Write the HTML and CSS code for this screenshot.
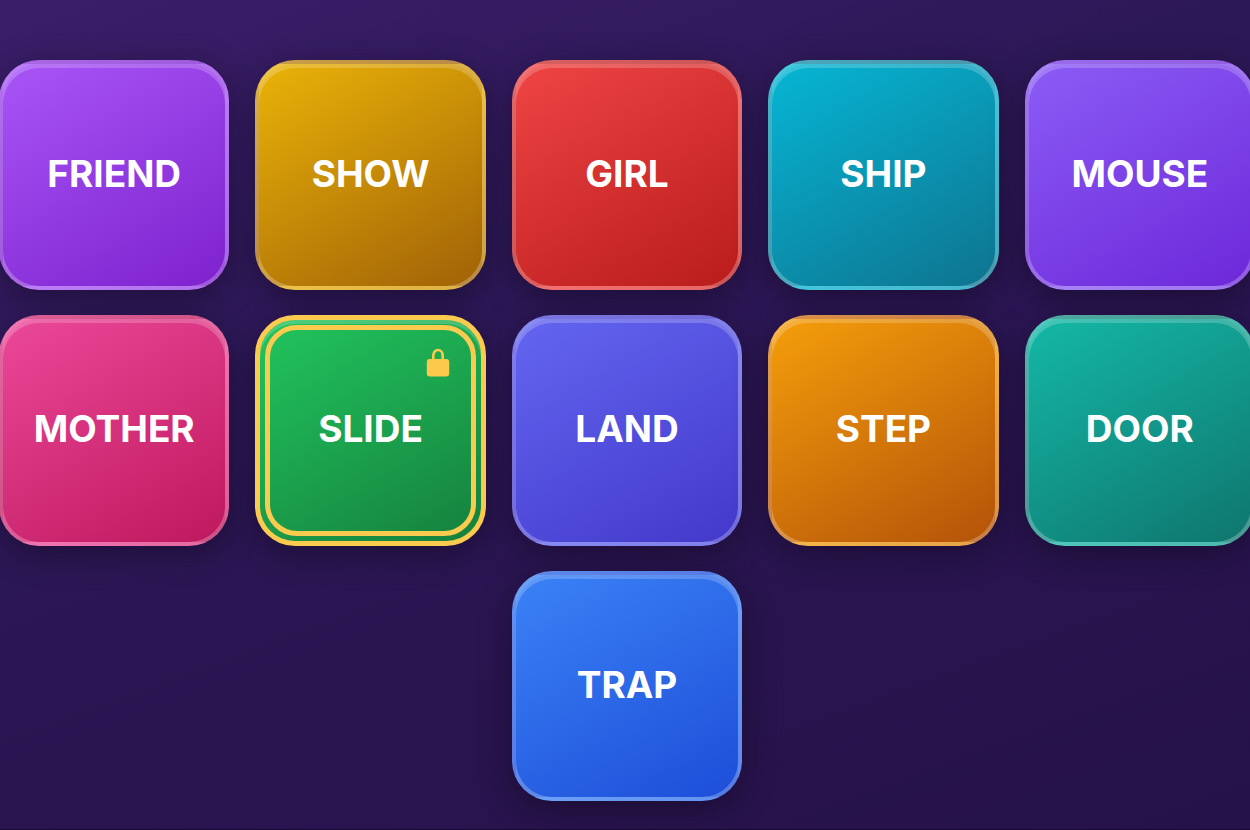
FILE: index.html
```
<!DOCTYPE html>
<html lang="en">
<head>
<meta charset="utf-8">
<meta name="viewport" content="width=device-width, initial-scale=1">
<title>Word tiles</title>
<link rel="stylesheet" href="styles.css">
</head>
<body>
<main class="board">
  <button type="button" class="tile purple"><span>FRIEND</span></button>
  <button type="button" class="tile yellow"><span>SHOW</span></button>
  <button type="button" class="tile red"><span>GIRL</span></button>
  <button type="button" class="tile cyan"><span>SHIP</span></button>
  <button type="button" class="tile violet"><span>MOUSE</span></button>
  <button type="button" class="tile pink"><span>MOTHER</span></button>
  <button type="button" class="tile green locked"><span>SLIDE</span>
    <svg class="lock" viewBox="0 0 24 30" aria-hidden="true">
      <path d="M7.300 12V7.500a4.700 5.500 0 0 1 9.400 0V12" fill="none" stroke="currentColor" stroke-width="2.600"/>
      <rect x="0.800" y="11" width="22.400" height="17.500" rx="3" fill="currentColor"/>
    </svg>
  </button>
  <button type="button" class="tile indigo"><span>LAND</span></button>
  <button type="button" class="tile orange"><span>STEP</span></button>
  <button type="button" class="tile teal"><span>DOOR</span></button>
  <button type="button" class="tile blue last"><span>TRAP</span></button>
</main>
</body>
</html>
```
FILE: styles.css
```
* { box-sizing: border-box; }

body {
  margin: 0;
  min-height: 100vh;
  overflow: hidden;
  background: linear-gradient(160deg, #3a1e69 0%, #2d1857 35%, #29144f 70%, #26124a 100%) no-repeat #170b33;
  border-bottom: 1px solid #170b33;
  font-family: Inter, Lato, sans-serif;
}

.board {
  display: grid;
  grid-template-columns: repeat(5, 1fr);
  gap: 25px 26px;
  margin: 0 -5px 0 -1px;
  padding: 60px 0 28px;
}

.tile {
  position: relative;
  display: flex;
  align-items: center;
  justify-content: center;
  aspect-ratio: 1;
  min-width: 0;
  padding: 0 0 4px;
  border: 4px solid rgba(255, 255, 255, 0.25);
  border-radius: 40px;
  background: linear-gradient(150deg, var(--from), var(--to));
  box-shadow: 0 8px 32px rgba(0, 0, 0, 0.35), inset 0 4px 0 rgba(255, 255, 255, 0.2);
  color: #fff;
  font: 700 37px/1 Inter, Lato, sans-serif;
  cursor: pointer;
}

.purple { --from: #a855f7; --to: #7e22ce; }
.yellow { --from: #eab308; --to: #a16207; }
.red { --from: #ef4444; --to: #b91c1c; }
.cyan { --from: #06b6d4; --to: #0e7490; }
.violet { --from: #8b5cf6; --to: #6d28d9; }
.pink { --from: #ec4899; --to: #be185d; }
.green { --from: #22c55e; --to: #15803d; }
.indigo { --from: #6366f1; --to: #4338ca; }
.orange { --from: #f59e0b; --to: #b45309; }
.teal { --from: #14b8a6; --to: #0f766e; }
.blue { --from: #3b82f6; --to: #1d4ed8; }

.last { grid-column: 3; }

.locked { border: 5px solid #fbcb50; }

.locked::after {
  content: "";
  position: absolute;
  inset: 5px;
  border: 5px solid #fbcb50;
  border-radius: 32px;
}

.lock {
  position: absolute;
  top: 28px;
  right: 31px;
  width: 24px;
  height: 30px;
  color: #fdc94c;
}
```
